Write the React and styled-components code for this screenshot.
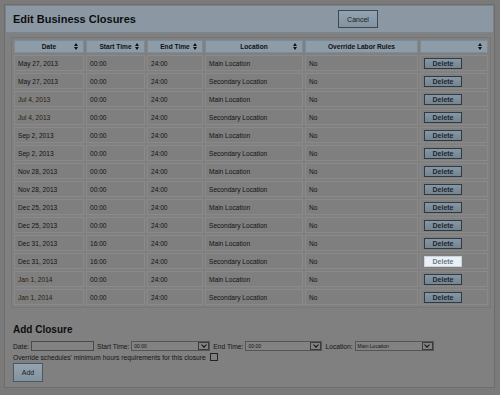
import React from 'react'
import styled, { createGlobalStyle } from 'styled-components'

const GlobalStyle = createGlobalStyle`
  html, body {
    margin: 0;
    background: #7a7a7a;
    font-family: 'Liberation Sans', Arial, sans-serif;
  }
`

const Panel = styled.div`
  margin: 4px 5px 0 4px;
  height: 384px;
  border: 1px solid #6d6d6d;
  background: #808080;
  box-sizing: border-box;
  padding: 1px;
`

const Header = styled.div`
  display: flex;
  align-items: center;
  justify-content: space-between;
  height: 26px;
  padding: 0 115px 0 7px;
  background: #8b98a3;
  border-bottom: 1px solid #7a868f;
`

const Title = styled.h1`
  margin: 0;
  font-size: 11px;
  font-weight: bold;
  color: #0e0e0e;
`

const Button = styled.button`
  font-family: 'Liberation Sans', Arial, sans-serif;
  color: #151c22;
  background: linear-gradient(#93a3af, #82939f);
  border: 1px solid #3b4752;
  cursor: pointer;
  padding: 0;
`

const CancelButton = styled(Button)`
  width: 40px;
  height: 18px;
  font-size: 7px;
`

const Table = styled.table`
  margin: 4px 0 0 5px;
  border-collapse: separate;
  border-spacing: 2px;
  border: 1px solid #767676;
  font-size: 6.6px;
  color: #121212;
  table-layout: fixed;
`

const Th = styled.th`
  position: relative;
  height: 11px;
  padding: 0 3px;
  background: #8c9ca8;
  border: 1px solid #7d8b96;
  font-weight: bold;
  text-align: center;
  width: ${p => p.w}px;
`

const SortIcon = styled.span`
  position: absolute;
  right: 5px;
  top: 2px;
  display: flex;
  flex-direction: column;
  gap: 1px;
  &::before, &::after {
    content: '';
    border-left: 2.5px solid transparent;
    border-right: 2.5px solid transparent;
  }
  &::before { border-bottom: 3px solid #111; }
  &::after { border-top: 3px solid #111; }
`

const Td = styled.td`
  height: 14px;
  padding: 0 3px;
  border: 1px solid #8a8a8a;
  background: #7f7f7f;
  vertical-align: middle;
  white-space: nowrap;
  color: ${p => (p.holiday ? '#2b1d0c' : '#121212')};
`

const DeleteButton = styled(Button)`
  display: block;
  width: 38px;
  height: 11px;
  font-size: 7px;
  font-weight: bold;
  color: ${p => (p.active ? '#6a7a88' : '#1c2733')};
  background: ${p => (p.active ? '#eaf0f6' : 'linear-gradient(#8696a3, #74858f)')};
  border-color: ${p => (p.active ? '#c9d3dc' : '#2e3a44')};
`

const AddSection = styled.div`
  padding: 0 7px;
`

const SubTitle = styled.h2`
  margin: 16px 0 6px;
  font-size: 10px;
  font-weight: bold;
  color: #0e0e0e;
`

const FormRow = styled.div`
  display: flex;
  align-items: center;
  gap: 2px;
  font-size: 6.7px;
  color: #151515;
  white-space: nowrap;
`

const TextInput = styled.input`
  width: 63px;
  height: 10px;
  margin-right: 1px;
  box-sizing: border-box;
  border: 1px solid #4a4a4a;
  background: #828282;
  padding: 0;
`

const Select = styled.div`
  display: flex;
  align-items: center;
  justify-content: space-between;
  width: ${p => p.w}px;
  height: 10px;
  box-sizing: border-box;
  border: 1px solid #555;
  background: #828282;
  font-size: 5px;
  padding-left: 2px;
  margin-right: 1px;
`

const Arrow = styled.span`
  width: 11px;
  height: 8px;
  box-sizing: border-box;
  border: 1px solid #3c3c3c;
  display: flex;
  align-items: center;
  justify-content: center;
  &::after {
    content: '';
    width: 3px;
    height: 3px;
    border-right: 1px solid #111;
    border-bottom: 1px solid #111;
    transform: translateY(-1px) rotate(45deg);
  }
`

const CheckRow = styled(FormRow)`
  margin-top: 2px;
`

const CheckBox = styled.span`
  width: 8px;
  height: 8px;
  border: 1px solid #222;
  box-sizing: border-box;
  margin-left: 2px;
`

const AddButton = styled(Button)`
  margin-top: 1px;
  width: 30px;
  height: 19px;
  font-size: 7px;
  border-color: #4a5864;
`

const rows = [
  ['May 27, 2013', '00:00', 'Main Location'],
  ['May 27, 2013', '00:00', 'Secondary Location'],
  ['Jul 4, 2013', '00:00', 'Main Location', true],
  ['Jul 4, 2013', '00:00', 'Secondary Location', true],
  ['Sep 2, 2013', '00:00', 'Main Location'],
  ['Sep 2, 2013', '00:00', 'Secondary Location'],
  ['Nov 28, 2013', '00:00', 'Main Location'],
  ['Nov 28, 2013', '00:00', 'Secondary Location'],
  ['Dec 25, 2013', '00:00', 'Main Location'],
  ['Dec 25, 2013', '00:00', 'Secondary Location'],
  ['Dec 31, 2013', '16:00', 'Main Location'],
  ['Dec 31, 2013', '16:00', 'Secondary Location'],
  ['Jan 1, 2014', '00:00', 'Main Location', true],
  ['Jan 1, 2014', '00:00', 'Secondary Location', true],
]

const App = () => {
  return (
    <>
      <GlobalStyle />
      <Panel>
        <Header>
          <Title>Edit Business Closures</Title>
          <CancelButton>Cancel</CancelButton>
        </Header>
        <Table>
          <thead>
            <tr>
              <Th w={62}>Date<SortIcon /></Th>
              <Th w={51}>Start Time<SortIcon /></Th>
              <Th w={48}>End Time<SortIcon /></Th>
              <Th w={90}>Location<SortIcon /></Th>
              <Th w={105}>Override Labor Rules</Th>
              <Th w={60}><SortIcon /></Th>
            </tr>
          </thead>
          <tbody>
            {rows.map(([date, start, loc, holiday], i) => (
              <tr key={i}>
                <Td holiday={holiday}>{date}</Td>
                <Td>{start}</Td>
                <Td>24:00</Td>
                <Td>{loc}</Td>
                <Td>No</Td>
                <Td>
                  <DeleteButton active={i === 11}>Delete</DeleteButton>
                </Td>
              </tr>
            ))}
          </tbody>
        </Table>
        <AddSection>
          <SubTitle>Add Closure</SubTitle>
          <FormRow>
            Date: <TextInput />
            Start Time: <Select w={79}>00:00<Arrow /></Select>
            End Time: <Select w={77}>00:00<Arrow /></Select>
            Location: <Select w={79}>Main Location<Arrow /></Select>
          </FormRow>
          <CheckRow>
            Override schedules' minimum hours requirements for this closure
            <CheckBox />
          </CheckRow>
          <AddButton>Add</AddButton>
        </AddSection>
      </Panel>
    </>
  )
}

export default App
